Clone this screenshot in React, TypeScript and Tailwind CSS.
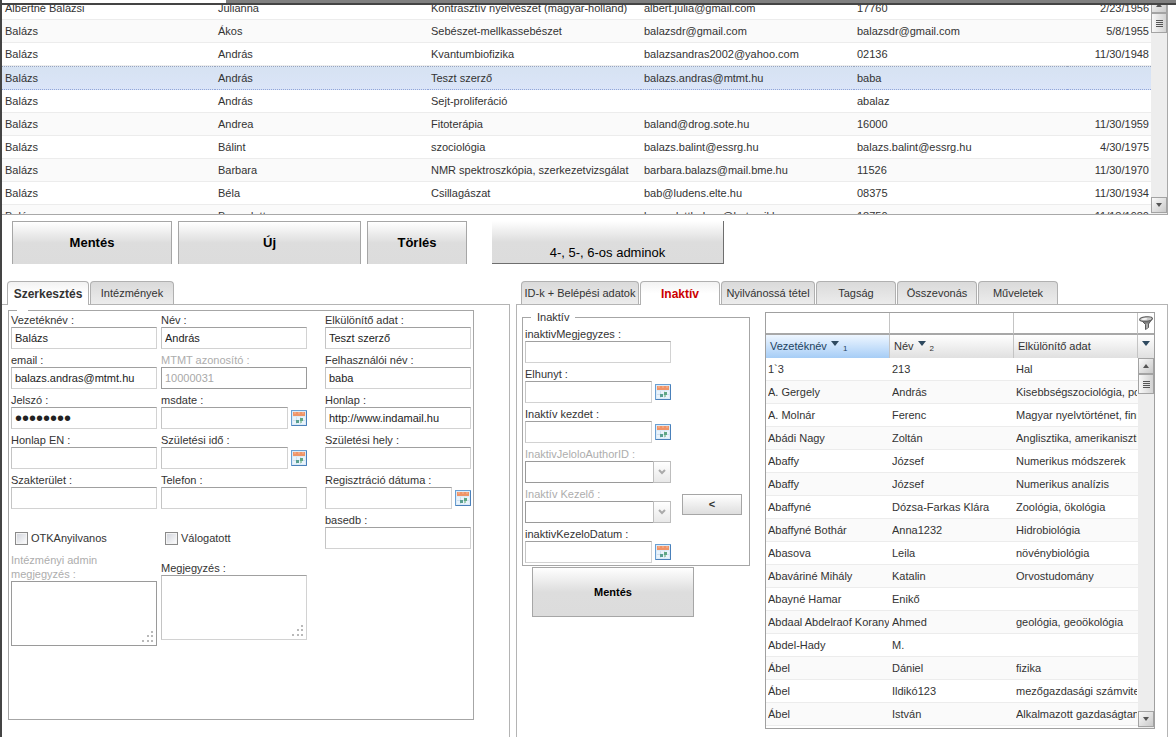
import type { ReactNode } from "react"
import clsx from "clsx"

type Author = {
  lastName: string
  firstName: string
  field: string
  email: string
  login: string
  born: string
}

const AUTHORS: Author[] = [
  { lastName: "Albertné Balázsi", firstName: "Julianna", field: "Kontrasztív nyelvészet (magyar-holland)", email: "albert.julia@gmail.com", login: "17760", born: "2/23/1956" },
  { lastName: "Balázs", firstName: "Ákos", field: "Sebészet-mellkassebészet", email: "balazsdr@gmail.com", login: "balazsdr@gmail.com", born: "5/8/1955" },
  { lastName: "Balázs", firstName: "András", field: "Kvantumbiofizika", email: "balazsandras2002@yahoo.com", login: "02136", born: "11/30/1948" },
  { lastName: "Balázs", firstName: "András", field: "Teszt szerző", email: "balazs.andras@mtmt.hu", login: "baba", born: "" },
  { lastName: "Balázs", firstName: "András", field: "Sejt-proliferáció", email: "", login: "abalaz", born: "" },
  { lastName: "Balázs", firstName: "Andrea", field: "Fitoterápia", email: "baland@drog.sote.hu", login: "16000", born: "11/30/1959" },
  { lastName: "Balázs", firstName: "Bálint", field: "szociológia", email: "balazs.balint@essrg.hu", login: "balazs.balint@essrg.hu", born: "4/30/1975" },
  { lastName: "Balázs", firstName: "Barbara", field: "NMR spektroszkópia, szerkezetvizsgálat", email: "barbara.balazs@mail.bme.hu", login: "11526", born: "11/30/1970" },
  { lastName: "Balázs", firstName: "Béla", field: "Csillagászat", email: "bab@ludens.elte.hu", login: "08375", born: "11/30/1934" },
  { lastName: "Balázs", firstName: "Bernadett", field: "", email: "bernadettbalazs@hotmail.hu", login: "18750", born: "11/18/1980" },
]

const SELECTED_INDEX = 3

const PEOPLE: [string, string, string][] = [
  ["1`3", "213", "Hal"],
  ["A. Gergely", "András", "Kisebbségszociológia, politika"],
  ["A. Molnár", "Ferenc", "Magyar nyelvtörténet, finnugor"],
  ["Abádi Nagy", "Zoltán", "Anglisztika, amerikanisztika"],
  ["Abaffy", "József", "Numerikus módszerek"],
  ["Abaffy", "József", "Numerikus analízis"],
  ["Abaffyné", "Dózsa-Farkas Klára", "Zoológia, ökológia"],
  ["Abaffyné Bothár", "Anna1232", "Hidrobiológia"],
  ["Abasova", "Leila", "növénybiológia"],
  ["Abaváriné Mihály", "Katalin", "Orvostudomány"],
  ["Abayné Hamar", "Enikő", ""],
  ["Abdaal Abdelraof Korany", "Ahmed", "geológia, geoökológia"],
  ["Abdel-Hady", "M.", ""],
  ["Ábel", "Dániel", "fizika"],
  ["Ábel", "Ildikó123", "mezőgazdasági számvitel"],
  ["Ábel", "István", "Alkalmazott gazdaságtan"],
]

const INPUT =
  "block h-[22px] w-full min-w-0 rounded-none border bg-white px-[3px] text-[#222] outline-none"
const INPUT_ON = "border-[#d2d2d2] border-t-[#a0a0a0] border-l-[#c4c4c4]"
const INPUT_OFF = "border-[#9a9a9a] text-[#a8a8a8]"

const BUTTON_FACE = "bg-[linear-gradient(to_bottom,#ffffff,#dddddd_50%,#dcdcdc)]"

function CalendarIcon() {
  return (
    <svg viewBox="0 0 16 16" className="size-4">
      <rect x="0.5" y="0.5" width="15" height="15" fill="#dcebf8" stroke="#6a9fd2" />
      <path d="M1 15.5H15.5V1" fill="none" stroke="#4a80ba" />
      <rect x="2" y="2" width="12" height="4" fill="#ef9468" />
      <path d="M3 3h2M7 3h2M11 3h2" stroke="#f7b899" />
      <rect x="2" y="7" width="12" height="7" fill="#e9f3fb" />
      <path d="M5.5 7v7M9.5 7v7M2 10.5h12" stroke="#cfe0ef" />
      <rect x="9" y="8" width="3" height="3" fill="#5fa682" />
      <rect x="5" y="10" width="3" height="3" fill="#5a9f90" />
      <rect x="9" y="11" width="2" height="2" fill="#9fcdb3" />
    </svg>
  )
}

function FunnelIcon() {
  return (
    <svg viewBox="0 0 16 16" className="size-4">
      <path d="M2 4L7.5 9.5V14.5L10.5 12.5V9L14.5 3.5z" fill="#7c7c7c" stroke="#5a5a5a" />
      <path d="M9 8.5v5" stroke="#d8d8d8" />
      <ellipse cx="8" cy="4" rx="6.4" ry="2.2" transform="rotate(-6 8 4)" fill="#c9c9c9" stroke="#5a5a5a" />
      <ellipse cx="6.5" cy="4" rx="3" ry="1" transform="rotate(-6 6.5 4)" fill="#f4f4f4" />
    </svg>
  )
}

function SortArrow() {
  return (
    <svg viewBox="0 0 8 5" className="h-[5px] w-2">
      <path d="M0 0h8L4 5z" fill="#2f4a60" />
    </svg>
  )
}

function ScrollButton({ direction }: { direction: "up" | "down" }) {
  return (
    <button
      type="button"
      aria-label={direction}
      className="flex size-4 shrink-0 items-center justify-center border border-[#a3a3a3] bg-linear-to-br from-[#fafafa] to-[#c9c9c9]"
    >
      <svg viewBox="0 0 6 4" className="h-1 w-[6px]">
        <path d={direction === "up" ? "M0 4h6L3 0z" : "M0 0h6L3 4z"} fill="#555" />
      </svg>
    </button>
  )
}

function ScrollBar() {
  return (
    <div className="flex min-h-0 flex-1 flex-col bg-[#ededed] pb-px">
      <ScrollButton direction="up" />
      <div className="flex h-5 shrink-0 flex-col items-center justify-center gap-px border border-[#a3a3a3] bg-linear-to-r from-[#f8f8f8] to-[#d2d2d2]">
        <div className="h-px w-[7px] bg-[#555]" />
        <div className="h-px w-[7px] bg-[#555]" />
        <div className="h-px w-[7px] bg-[#555]" />
        <div className="h-px w-[7px] bg-[#555]" />
      </div>
      <div className="flex-1" />
      <ScrollButton direction="down" />
    </div>
  )
}

type FieldProps = {
  id: string
  label: string
  value?: string
  type?: string
  date?: boolean
  disabled?: boolean
}

function FieldLabel({ id, label, disabled }: { id: string; label: string; disabled?: boolean }) {
  return (
    <label
      htmlFor={id}
      className={clsx("flex min-h-4 items-end leading-[14px]", disabled ? "text-[#adadad]" : "text-[#333]")}
    >
      {`${label} :`}
    </label>
  )
}

function Field({ id, label, value = "", type = "text", date, disabled }: FieldProps) {
  return (
    <div>
      <FieldLabel id={id} label={label} disabled={disabled} />
      <div className="flex items-center gap-[3px]">
        <input
          id={id}
          type={type}
          defaultValue={value}
          disabled={disabled}
          className={clsx(
            INPUT,
            disabled ? INPUT_OFF : INPUT_ON,
            type === "password" ? "text-xl leading-5" : "text-[11px]"
          )}
        />
        {date && (
          <button type="button" aria-label={label} className="size-4 shrink-0">
            <CalendarIcon />
          </button>
        )}
      </div>
    </div>
  )
}

function PickerField({ id, label }: { id: string; label: string }) {
  return (
    <div>
      <FieldLabel id={id} label={label} disabled />
      <div className="relative">
        <select id={id} disabled className={clsx(INPUT, INPUT_OFF, "appearance-none opacity-100")} />
        <span className="pointer-events-none absolute inset-y-0 right-0 flex w-[18px] items-center justify-center border border-[#bdbdbd] bg-linear-to-b from-white to-[#e8e8e8]">
          <svg viewBox="0 0 8 6" className="h-[6px] w-2">
            <path d="M1 1l3 3 3-3" fill="none" stroke="#aaa" strokeWidth="2" />
          </svg>
        </span>
      </div>
    </div>
  )
}

function TextArea({ id, label, disabled }: { id: string; label: string; disabled?: boolean }) {
  return (
    <div className="w-[146px]">
      <FieldLabel id={id} label={label} disabled={disabled} />
      <div className="relative">
        <textarea
          id={id}
          disabled={disabled}
          className={clsx("block h-[65px] w-full resize-none border bg-white", disabled ? INPUT_OFF : INPUT_ON)}
        />
        <svg viewBox="0 0 14 14" className="pointer-events-none absolute right-[2px] bottom-[2px] size-[14px]">
          <path
            d="M10 1h2v2h-2zM10 5h2v2h-2zM6 5h2v2h-2zM10 10h2v2h-2zM6 10h2v2h-2zM1 10h2v2h-2z"
            fill="#b9b9b9"
          />
        </svg>
      </div>
    </div>
  )
}

function CheckField({ id, label }: { id: string; label: string }) {
  return (
    <div className="flex w-[146px] items-center gap-[3px] pl-1">
      <input
        id={id}
        type="checkbox"
        className="size-[13px] appearance-none border border-[#8a8a8a] bg-linear-to-br from-[#cfd2da] to-white shadow-[inset_0_0_0_1px_#f4f4f4]"
      />
      <label htmlFor={id} className="leading-[14px]">
        {label}
      </label>
    </div>
  )
}

function Tab({ active, className, children }: { active?: boolean; className: string; children: ReactNode }) {
  return (
    <button
      type="button"
      role="tab"
      aria-selected={!!active}
      className={clsx(
        "shrink-0 rounded-t border border-b-0 border-[#b0b0b0] whitespace-nowrap",
        active
          ? "relative z-10 -mb-px h-6 bg-linear-to-b from-[#f2f2f2] to-white to-50% text-[12px] font-bold"
          : "h-[23px] bg-linear-to-b from-[#dadada] to-[#ececec]",
        className
      )}
    >
      {children}
    </button>
  )
}

function AuthorGrid() {
  return (
    <div className="mr-2 flex h-[210px] overflow-hidden border-r border-b border-[#a8a8a8]">
      <div className="min-w-0 flex-1 overflow-hidden">
        {/* list is scrolled a few pixels into its first row */}
        <table className="-mt-2 w-full table-fixed border-separate border-spacing-0">
          <colgroup>
            <col className="w-[213px]" />
            <col className="w-[213px]" />
            <col className="w-[213px]" />
            <col className="w-[213px]" />
            <col className="w-[213px]" />
            <col className="w-[84px]" />
          </colgroup>
          <tbody>
            {AUTHORS.map((author, i) => {
              const cell = clsx(
                "overflow-hidden whitespace-nowrap p-0 pl-[3px]",
                i === SELECTED_INDEX
                  ? "h-6 border-y border-dotted border-t-[#98a6bd] border-b-[#90a4dc] bg-linear-to-b from-[#d6e2f2] to-[#dbe5f8]"
                  : "h-[23px] border-b border-[#ececec]",
                i !== SELECTED_INDEX && i % 2 === 1 && "bg-[#fafafa]"
              )
              return (
                <tr key={i}>
                  <td className={cell}>{author.lastName}</td>
                  <td className={cell}>{author.firstName}</td>
                  <td className={cell}>{author.field}</td>
                  <td className={cell}>{author.email}</td>
                  <td className={cell}>{author.login}</td>
                  <td className={clsx(cell, "pr-[2px] text-right")}>{author.born}</td>
                </tr>
              )
            })}
          </tbody>
        </table>
      </div>
      <div className="-mt-2 flex w-4 flex-col">
        <ScrollBar />
      </div>
    </div>
  )
}

function Toolbar() {
  const button = clsx(
    "h-[43px] shrink-0 border border-b-0 border-[#a6a6a6] text-[13px] font-bold text-black",
    BUTTON_FACE
  )
  return (
    <div className="mt-[6px] flex gap-[6px] pl-[10px]">
      <button type="button" className={clsx(button, "w-40")}>Mentés</button>
      <button type="button" className={clsx(button, "w-[183px]")}>Új</button>
      <button type="button" className={clsx(button, "w-[100px]")}>Törlés</button>
      <button
        type="button"
        className={clsx(
          "ml-[19px] flex h-[43px] w-[232px] shrink-0 items-end justify-center border-r border-b border-[#6e6e6e] pb-px text-[13px] text-black",
          BUTTON_FACE
        )}
      >
        4-, 5-, 6-os adminok
      </button>
    </div>
  )
}

function EditPanel() {
  return (
    <section className="flex flex-col">
      <div role="tablist" className="flex items-start gap-px pl-[5px]">
        <Tab active className="w-[82px]">Szerkesztés</Tab>
        <Tab className="w-[84px]">Intézmények</Tab>
      </div>
      <div className="flex-1 border-t border-r border-[#b4b4b4] pt-[5px] pb-4 pl-[6px]">
        <fieldset className="h-[410px] w-[466px] border border-[#a6a6a6] px-[2px]">
          <legend className="ml-[6px] h-px w-[11px]" />
          <div className="flex gap-[18px]">
            <div>
              <div className="grid grid-cols-[146px_146px] gap-x-1 gap-y-[2px]">
                <Field id="lastName" label="Vezetéknév" value="Balázs" />
                <Field id="firstName" label="Név" value="András" />
                <Field id="email" label="email" value="balazs.andras@mtmt.hu" />
                <Field id="mtmtId" label="MTMT azonosító" value="10000031" disabled />
                <Field id="password" label="Jelszó" value="password" type="password" />
                <Field id="msdate" label="msdate" date />
                <Field id="homepageEn" label="Honlap EN" />
                <Field id="birthDate" label="Születési idő" date />
                <Field id="speciality" label="Szakterület" />
                <Field id="phone" label="Telefon" />
              </div>
              <div className="mt-[22px] flex gap-1">
                <CheckField id="otka" label="OTKAnyilvanos" />
                <CheckField id="selected" label="Válogatott" />
              </div>
              <div className="mt-2 flex items-center gap-1">
                <TextArea id="adminNote" label="Intézményi admin megjegyzés" disabled />
                <TextArea id="note" label="Megjegyzés" />
              </div>
            </div>
            <div className="flex w-[146px] flex-col gap-[2px]">
              <Field id="distinct" label="Elkülönítő adat" value="Teszt szerző" />
              <Field id="username" label="Felhasználói név" value="baba" />
              <Field id="homepage" label="Honlap" value="http://www.indamail.hu" />
              <Field id="birthPlace" label="Születési hely" />
              <Field id="registered" label="Regisztráció dátuma" date />
              <Field id="basedb" label="basedb" />
            </div>
          </div>
        </fieldset>
      </div>
    </section>
  )
}

function InactiveForm() {
  return (
    <div className="w-[228px] shrink-0">
      <fieldset className="border border-[#a6a6a6] px-[2px] pb-[2px]">
        <legend className="ml-[6px] px-[6px] leading-[14px]">Inaktív</legend>
        <div className="flex gap-[11px] pt-px">
          <div className="flex w-[146px] flex-col gap-[2px]">
            <Field id="inactiveNote" label="inaktivMegjegyzes" />
            <Field id="deceased" label="Elhunyt" date />
            <Field id="inactiveFrom" label="Inaktív kezdet" date />
            <PickerField id="inactiveAuthor" label="InaktivJeloloAuthorID" />
            <PickerField id="inactiveHandler" label="Inaktív Kezelő" />
            <Field id="inactiveHandled" label="inaktivKezeloDatum" date />
          </div>
          <button
            type="button"
            className="mb-12 h-[21px] w-[60px] self-end border border-[#a6a6a6] bg-linear-to-b from-white to-[#dedede] font-bold"
          >
            &lt;
          </button>
        </div>
      </fieldset>
      <button
        type="button"
        className={clsx("mt-px ml-[10px] h-[50px] w-[162px] border border-[#a6a6a6] font-bold text-black", BUTTON_FACE)}
      >
        Mentés
      </button>
    </div>
  )
}

function HeaderCell({ title, order, active }: { title: string; order?: number; active?: boolean }) {
  return (
    <th
      className={clsx(
        "h-[23px] border-r border-[#c4c4c4] bg-linear-to-b p-0 text-left font-normal",
        active ? "from-[#eef6ff] to-[#a6cdf6] text-[#1f4360]" : "from-white to-[#e0e0e0]"
      )}
    >
      <div className="flex items-center gap-1 pl-1">
        {title}
        {order && (
          <>
            <span className="mb-[6px]">
              <SortArrow />
            </span>
            <span className="mt-1 text-[8px] leading-3">{order}</span>
          </>
        )}
      </div>
    </th>
  )
}

function PeopleGrid() {
  return (
    <div className="mt-[2px] flex min-w-0 flex-1 self-start border border-[#a0a0a0]">
      <div className="min-w-0 flex-1 pb-[2px]">
        <table className="w-full table-fixed border-separate border-spacing-0">
          <thead>
            <tr>
              {["Vezetéknév", "Név", "Elkülönítő adat"].map((name) => (
                <th key={name} className="h-[22px] border-r border-b-2 border-[#c4c4c4] border-b-[#a8a8a8] p-0">
                  <input aria-label={name} className="block h-5 w-full px-1 font-normal outline-none" />
                </th>
              ))}
            </tr>
            <tr>
              <HeaderCell title="Vezetéknév" order={1} active />
              <HeaderCell title="Név" order={2} />
              <HeaderCell title="Elkülönítő adat" />
            </tr>
          </thead>
          <tbody>
            {PEOPLE.map((row, i) => (
              <tr key={i} className={i % 2 === 1 ? "bg-[#fafafa]" : "bg-white"}>
                {row.map((text, j) => (
                  <td key={j} className="h-[23px] border-b border-[#ececec] py-0 pr-px pl-[2px]">
                    <div className="overflow-hidden whitespace-nowrap">{text}</div>
                  </td>
                ))}
              </tr>
            ))}
          </tbody>
        </table>
      </div>
      <div className="flex w-4 shrink-0 flex-col">
        <button
          type="button"
          aria-label="filter"
          className="flex h-[22px] items-center justify-center border-b-2 border-[#a8a8a8]"
        >
          <FunnelIcon />
        </button>
        <button
          type="button"
          aria-label="menu"
          className="flex h-[23px] items-center justify-center bg-linear-to-b from-white to-[#e0e0e0] pb-[6px]"
        >
          <SortArrow />
        </button>
        <ScrollBar />
      </div>
    </div>
  )
}

function InactivePanel() {
  return (
    <section className="flex min-w-0 flex-col">
      <div role="tablist" className="flex items-start gap-px pl-[5px]">
        <Tab className="w-[118px]">ID-k + Belépési adatok</Tab>
        <Tab active className="w-20 text-[#cc0000]">Inaktív</Tab>
        <Tab className="w-[94px]">Nyilvánossá tétel</Tab>
        <Tab className="w-20">Tagság</Tab>
        <Tab className="w-20">Összevonás</Tab>
        <Tab className="w-20">Műveletek</Tab>
      </div>
      <div className="flex flex-1 gap-[15px] border border-b-0 border-[#b4b4b4] pt-[5px] pr-3 pb-2 pl-[5px]">
        <InactiveForm />
        <PeopleGrid />
      </div>
    </section>
  )
}

export default function App() {
  return (
    <div className="flex min-h-screen flex-col border-l-2 border-[#444] bg-white font-['Liberation_Sans',Arial,sans-serif] text-[11px] text-[#333]">
      <div className="flex h-[5px] shrink-0 border-b-2 border-[#444]">
        <div className="w-56" />
        <div className="flex-1 bg-[#808080]" />
      </div>
      <AuthorGrid />
      <Toolbar />
      <main className="mt-[17px] mr-2 grid flex-1 grid-cols-[508fr_652fr] gap-[6px]">
        <EditPanel />
        <InactivePanel />
      </main>
    </div>
  )
}
